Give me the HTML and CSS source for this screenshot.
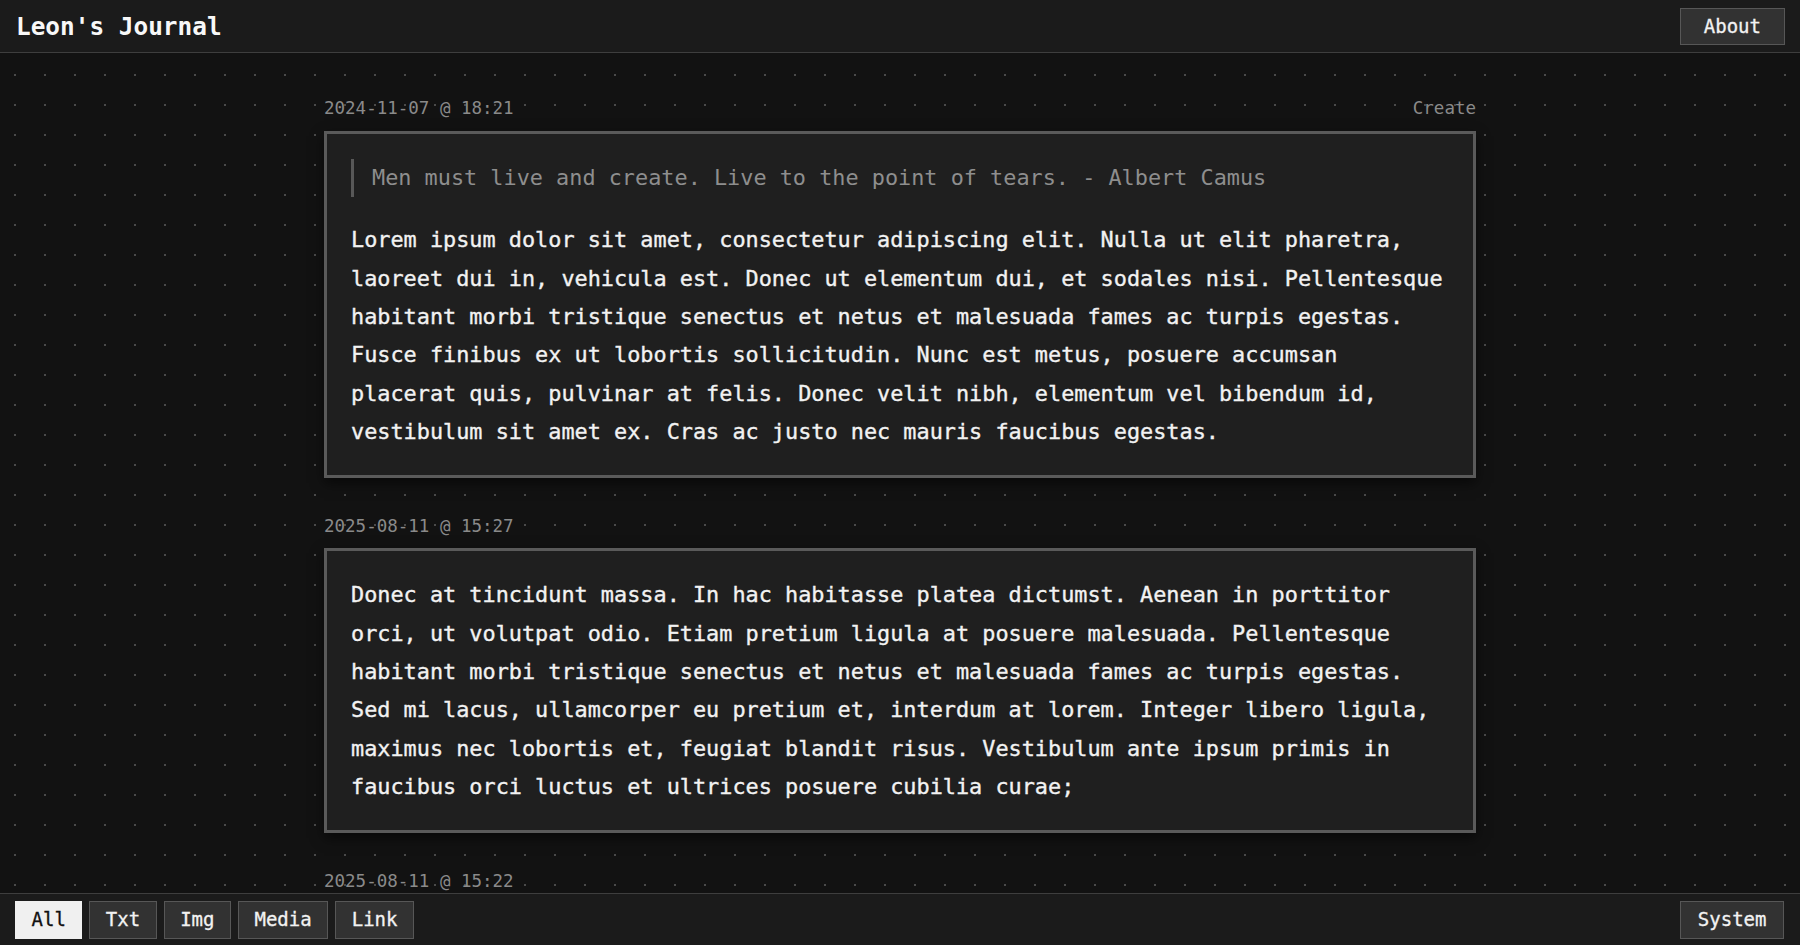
FILE: index.html
```html
<!DOCTYPE html>
<html lang="en">
<head>
<meta charset="utf-8">
<title>Leon's Journal</title>
<link rel="stylesheet" href="styles.css">
</head>
<body>
<div class="app">
  <header class="topbar">
    <h1 class="brand">Leon's Journal</h1>
    <button class="btn btn-about">About</button>
  </header>
  <main class="feed">
    <article class="entry">
      <div class="entry-meta">
        <span class="entry-date">2024-11-07 @ 18:21</span>
        <span class="entry-tag">Create</span>
      </div>
      <div class="card">
        <blockquote class="quote">Men must live and create. Live to the point of tears. - Albert Camus</blockquote>
        <p class="text">Lorem ipsum dolor sit amet, consectetur adipiscing elit. Nulla ut elit pharetra, laoreet dui in, vehicula est. Donec ut elementum dui, et sodales nisi. Pellentesque habitant morbi tristique senectus et netus et malesuada fames ac turpis egestas. Fusce finibus ex ut lobortis sollicitudin. Nunc est metus, posuere accumsan placerat quis, pulvinar at felis. Donec velit nibh, elementum vel bibendum id, vestibulum sit amet ex. Cras ac justo nec mauris faucibus egestas.</p>
      </div>
    </article>
    <article class="entry">
      <div class="entry-meta">
        <span class="entry-date">2025-08-11 @ 15:27</span>
      </div>
      <div class="card">
        <p class="text">Donec at tincidunt massa. In hac habitasse platea dictumst. Aenean in porttitor orci, ut volutpat odio. Etiam pretium ligula at posuere malesuada. Pellentesque habitant morbi tristique senectus et netus et malesuada fames ac turpis egestas. Sed mi lacus, ullamcorper eu pretium et, interdum at lorem. Integer libero ligula, maximus nec lobortis et, feugiat blandit risus. Vestibulum ante ipsum primis in faucibus orci luctus et ultrices posuere cubilia curae;</p>
      </div>
    </article>
    <article class="entry">
      <div class="entry-meta">
        <span class="entry-date">2025-08-11 @ 15:22</span>
      </div>
    </article>
  </main>
  <footer class="bottombar">
    <nav class="filters">
      <button class="btn btn-filter is-active">All</button>
      <button class="btn btn-filter">Txt</button>
      <button class="btn btn-filter">Img</button>
      <button class="btn btn-filter">Media</button>
      <button class="btn btn-filter">Link</button>
    </nav>
    <button class="btn btn-system">System</button>
  </footer>
</div>
</body>
</html>
```

FILE: styles.css
```css
* { box-sizing: border-box; }

html, body {
  margin: 0;
  height: 100%;
}

body {
  background-color: #121212;
  background-image: radial-gradient(circle at center, #4a4a4a 0 1px, transparent 1.2px);
  background-size: 30px 30px;
  background-position: 0 0;
  color: #eeeeee;
  font-family: "DejaVu Sans Mono", "Liberation Mono", monospace;
  overflow: hidden;
}

.app {
  height: 100vh;
  display: flex;
  flex-direction: column;
}

.topbar {
  flex: 0 0 53px;
  display: flex;
  align-items: center;
  justify-content: space-between;
  padding: 0 15px 0 16px;
  background: #1b1b1b;
  border-bottom: 1px solid #3e3e3e;
}

.brand {
  margin: 1px 0 0;
  font-size: 24.4px;
  font-weight: bold;
  color: #f8f8f8;
}

.btn {
  font-family: inherit;
  font-size: 19px;
  color: #f2f2f2;
  background: #323232;
  border: 1px solid #575757;
  height: 38px;
  padding: 0 15.5px;
  border-radius: 0;
  line-height: 1;
  cursor: pointer;
  -webkit-text-stroke: 0.3px currentColor;
}

.btn-about {
  height: 37px;
  padding: 0 23px;
}

.btn-system {
  padding: 0 16.5px;
}

.feed {
  flex: 1 1 auto;
  overflow: hidden;
  padding: 42px 0 0;
  display: flex;
  flex-direction: column;
  align-items: center;
}

.entry {
  width: 1152px;
  margin-bottom: 35px;
}

.entry-meta {
  display: flex;
  justify-content: space-between;
  font-size: 17.5px;
  line-height: 27.7px;
  color: #8a8a8a;
  margin-bottom: 8px;
}

.card {
  background: #1f1f1f;
  border: 3px solid #5a5a5a;
  padding: 25px 24px 23px;
  box-shadow: 0 5px 12px rgba(0, 0, 0, 0.55);
  font-size: 21.85px;
  line-height: 38.4px;
}

.quote {
  margin: 0 0 24px;
  border-left: 3px solid #585858;
  padding-left: 18px;
  color: #8e8e8e;
}

.text {
  margin: 0;
  color: #f2f2f2;
  -webkit-text-stroke: 0.35px currentColor;
}

.bottombar {
  position: fixed;
  left: 0;
  right: 0;
  bottom: 0;
  height: 52px;
  display: flex;
  align-items: center;
  justify-content: space-between;
  padding: 0 16px 0 15px;
  background: #1b1b1b;
  border-top: 1px solid #3e3e3e;
}

.filters {
  display: flex;
  gap: 7px;
}

.btn-filter.is-active {
  background: #f0f0f0;
  border-color: #f0f0f0;
  color: #111111;
}
```
